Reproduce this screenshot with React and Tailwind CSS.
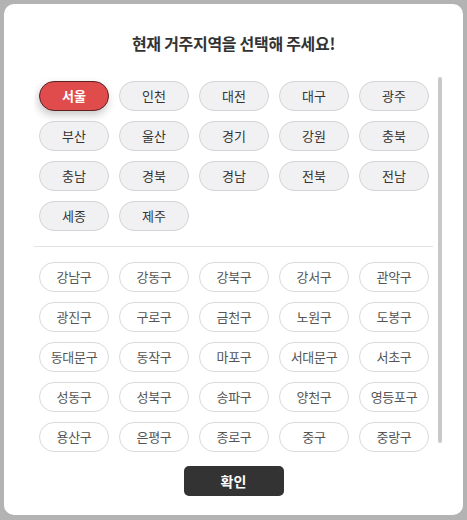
import React from "react";

const cities = ["서울","인천","대전","대구","광주","부산","울산","경기","강원","충북","충남","경북","경남","전북","전남","세종","제주"];
const districts = ["강남구","강동구","강북구","강서구","관악구","광진구","구로구","금천구","노원구","도봉구","동대문구","동작구","마포구","서대문구","서초구","성동구","성북구","송파구","양천구","영등포구","용산구","은평구","종로구","중구","중랑구"];

export default function App() {
  return (
    <div
      className="w-[467px] h-[520px] bg-[#b3b3b3] pt-[4px] pl-[4px] overflow-hidden"
      style={{ fontFamily: '"Noto Sans CJK KR", "Noto Sans", sans-serif' }}
    >
      <div className="w-[459px] h-[511px] bg-white rounded-[10px] flex flex-col">
        <div className="pt-[29px] h-[67px] text-center text-[16px] leading-[20px] font-bold text-[#333] tracking-[-0.3px]">
          현재 거주지역을 선택해 주세요!
        </div>
        <div className="flex h-[381px] ml-[30px]">
          <div className="w-[399px] overflow-hidden">
            <div className="grid grid-cols-[repeat(5,70px)] gap-[10px] pl-[5px] pt-[10px]">
              {cities.map((c, i) =>
                i === 0 ? (
                  <button
                    key={c}
                    className="h-[30px] rounded-full bg-[#e04b4b] border border-[#5c2323] text-white text-[13px] font-bold shadow-[-1px_4px_8px_rgba(0,0,0,0.22)]"
                  >
                    {c}
                  </button>
                ) : (
                  <button
                    key={c}
                    className="h-[30px] rounded-full bg-[#f1f1f3] border border-[#d4d4d4] text-[#333] text-[13px]"
                  >
                    {c}
                  </button>
                )
              )}
            </div>
            <div className="mt-[15px] border-t border-[#e3e3e3]" />
            <div className="grid grid-cols-[repeat(5,70px)] gap-[10px] pl-[5px] pt-[15px]">
              {districts.map((d) => (
                <button
                  key={d}
                  className="h-[30px] rounded-full bg-white border border-[#d9d9d9] text-[#555] text-[13px] tracking-[-0.3px]"
                >
                  {d}
                </button>
              ))}
            </div>
          </div>
          <div className="ml-[5px] mt-[6px] w-[4px] h-[366px] rounded-full bg-[#c8c8c8]" />
        </div>
        <div className="flex justify-center mt-[14px]">
          <button className="w-[100px] h-[30px] rounded-[5px] bg-[#333] text-white text-[14px] font-bold">
            확인
          </button>
        </div>
      </div>
    </div>
  );
}
